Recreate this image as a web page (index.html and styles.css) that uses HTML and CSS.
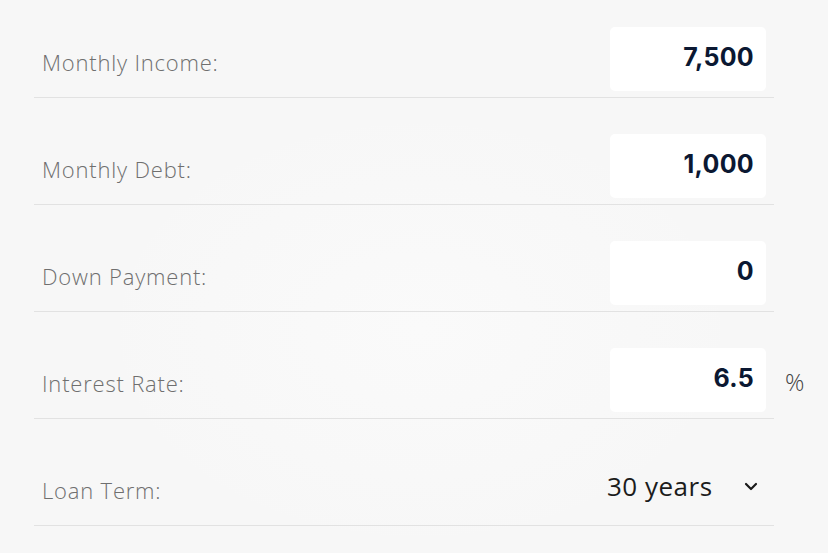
FILE: index.html
```html
<!DOCTYPE html>
<html lang="en">
<head>
<meta charset="utf-8">
<title>Affordability inputs</title>
<link rel="stylesheet" href="styles.css">
</head>
<body>
<div class="form">
  <div class="row first">
    <span class="label">Monthly Income:</span>
    <div class="field"><span class="value">7,500</span></div>
  </div>
  <div class="row">
    <span class="label">Monthly Debt:</span>
    <div class="field"><span class="value">1,000</span></div>
  </div>
  <div class="row">
    <span class="label">Down Payment:</span>
    <div class="field"><span class="value">0</span></div>
  </div>
  <div class="row">
    <span class="label">Interest Rate:</span>
    <div class="field"><span class="value">6.5</span><span class="unit">%</span></div>
  </div>
  <div class="row">
    <span class="label">Loan Term:</span>
    <div class="select">
      <span class="select-text">30 years</span>
      <svg class="chevron" width="14" height="9" viewBox="0 0 14 9"><path d="M2 2 L7 7 L12 2" fill="none" stroke="#1a1a1a" stroke-width="2.2" stroke-linecap="round" stroke-linejoin="round"/></svg>
    </div>
  </div>
</div>
</body>
</html>
```
FILE: styles.css
```css
html, body {
  margin: 0;
  padding: 0;
}
body {
  width: 828px;
  height: 553px;
  overflow: hidden;
  background: #f7f7f7;
  background-image: radial-gradient(ellipse 320px 220px at 420px 330px, #fafafa 0%, rgba(250,250,250,0) 100%);
  font-family: "Open Sans", "Liberation Sans", sans-serif;
}
.form {
  margin-left: 34px;
  width: 740px;
}
.row {
  display: flex;
  align-items: center;
  justify-content: space-between;
  height: 70px;
  padding-top: 36px;
  border-bottom: 1px solid #e2e2e2;
}
.row.first {
  padding-top: 27px;
}
.label {
  padding-left: 8px;
  margin-top: 0;
  font-size: 22px;
  font-weight: 300;
  letter-spacing: 0.8px;
  color: #6f6f6f;
}
.field {
  position: relative;
  margin-right: 8px;
  margin-bottom: 6px;
  width: 156px;
  height: 64px;
  box-sizing: border-box;
  background: #ffffff;
  border-radius: 5px;
  display: flex;
  align-items: center;
  justify-content: flex-end;
  padding-right: 12px;
  padding-bottom: 4px;
}
.value {
  font-family: "Inter", "Liberation Sans", sans-serif;
  font-weight: 700;
  font-size: 25px;
  color: #0b1832;
  letter-spacing: 0.3px;
}
.unit {
  position: absolute;
  left: calc(100% + 19px);
  top: 17px;
  font-size: 24px;
  font-weight: 300;
  color: #444444;
}
.select {
  margin-right: 16px;
  margin-bottom: 6px;
  width: 151px;
  height: 64px;
  display: flex;
  align-items: center;
  justify-content: space-between;
  padding-bottom: 2px;
  box-sizing: border-box;
}
.select-text {
  font-size: 26px;
  color: #1c1c1c;
  letter-spacing: 0.5px;
  margin-left: 0;
}
.chevron {
  display: block;
}
```
